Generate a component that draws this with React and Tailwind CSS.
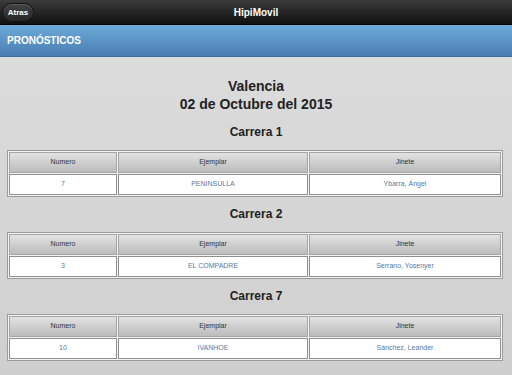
const carreras = [
  { nombre: "Carrera 1", numero: "7", ejemplar: "PENINSULLA", jinete: "Ybarra, Ángel" },
  { nombre: "Carrera 2", numero: "3", ejemplar: "EL COMPADRE", jinete: "Serrano, Yosenyer" },
  { nombre: "Carrera 7", numero: "10", ejemplar: "IVANHOE", jinete: "Sánchez, Leander" },
];

function Carrera({ c, first }) {
  return (
    <div className={first ? "mt-[11px]" : "mt-[9px]"}>
      <h3 className="text-center text-[12px] font-bold leading-[16px] text-[#222]">{c.nombre}</h3>
      <table className="mt-[10px] w-[496px] table-fixed border-separate border-spacing-[1px] border border-[#9b9b9b] bg-[#f4f4f4]">
        <colgroup>
          <col className="w-[108px]" />
          <col className="w-[190px]" />
          <col />
        </colgroup>
        <thead>
          <tr>
            {["Numero", "Ejemplar", "Jinete"].map((h) => (
              <th
                key={h}
                className="h-[21px] border border-[#a5a5a5] bg-gradient-to-b from-[#e2e2e2] to-[#bcbcbc] p-0 text-center text-[7px] font-normal text-[#333]"
              >
                {h}
              </th>
            ))}
          </tr>
        </thead>
        <tbody>
          <tr>
            {[c.numero, c.ejemplar, c.jinete].map((v, i) => (
              <td
                key={i}
                className="h-[21px] border border-[#8f8f8f] bg-white p-0 text-center text-[7px] text-[#5a78a0]"
              >
                {v}
              </td>
            ))}
          </tr>
        </tbody>
      </table>
    </div>
  );
}

export default function App() {
  return (
    <div className="flex h-[375px] w-[512px] flex-col overflow-hidden font-['Liberation_Sans',Arial,sans-serif]">
      <div className="relative flex h-[25px] shrink-0 items-center justify-center border-b border-[#000] bg-gradient-to-b from-[#3c3c3c] to-[#111]">
        <button className="absolute left-[2px] top-[3px] flex h-[19px] w-[32px] items-center justify-center rounded-full border border-[#111] bg-gradient-to-b from-[#444] to-[#262626] text-[8px] font-bold text-white shadow-[inset_0_1px_0_rgba(255,255,255,0.12)]">
          Atras
        </button>
        <span className="text-[10px] font-bold text-white">HipiMovil</span>
      </div>
      <div className="flex h-[32px] shrink-0 items-center border-b border-[#3d6d9c] bg-gradient-to-b from-[#6cabd9] to-[#4a7db2] px-[7px]">
        <span className="text-[10px] font-bold text-white">PRONÓSTICOS</span>
      </div>
      <div className="flex-1 bg-gradient-to-b from-[#dcdcdc] to-[#cfcfcf] px-[7px] pt-[20px]">
        <h1 className="text-center text-[14px] font-bold leading-[18px] text-[#222]">Valencia</h1>
        <h2 className="text-center text-[14px] font-bold leading-[18px] text-[#222]">02 de Octubre del 2015</h2>
        {carreras.map((c, i) => (
          <Carrera key={c.nombre} c={c} first={i === 0} />
        ))}
      </div>
    </div>
  );
}
